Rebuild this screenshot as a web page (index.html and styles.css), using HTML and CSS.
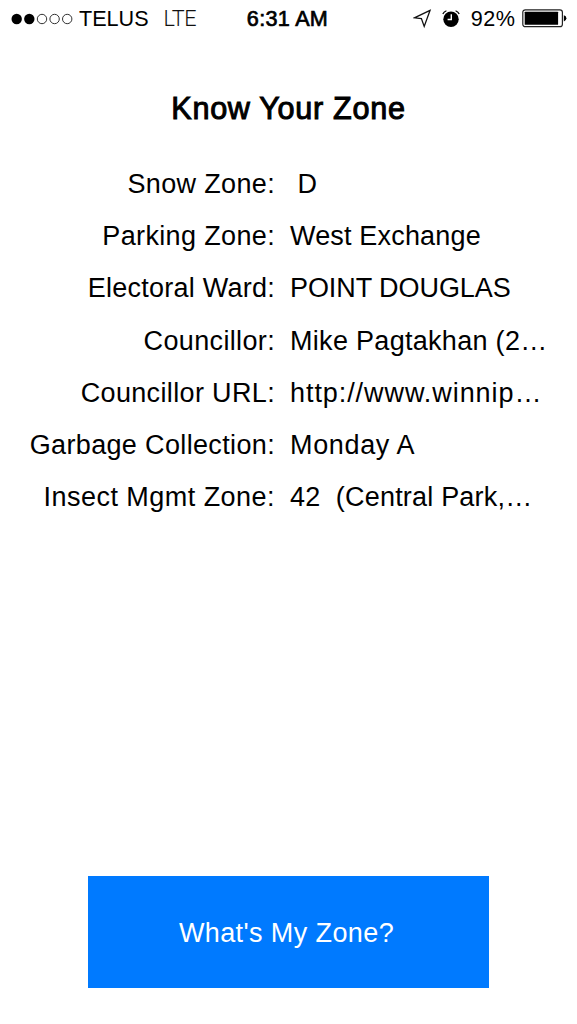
FILE: index.html
```
<!DOCTYPE html>
<html lang="en">
<head>
    <meta charset="UTF-8">
    <meta name="viewport" content="width=device-width, initial-scale=1.0">
    <title>Know Your Zone</title>
    <link rel="stylesheet" href="styles.css">
</head>
<body>
    <header class="status-bar">
        <div class="status-left">
            <svg class="signal" width="62" height="12" viewBox="0 0 62 12">
                <circle cx="5.7" cy="6" r="5.2" />
                <circle cx="18.3" cy="6" r="5.2" />
                <circle class="empty" cx="31" cy="6" r="4.7" />
                <circle class="empty" cx="43.6" cy="6" r="4.7" />
                <circle class="empty" cx="56.2" cy="6" r="4.7" />
            </svg>
            <span class="carrier">TELUS</span>
            <span class="network">LTE</span>
        </div>
        <span class="time">6:31 AM</span>
        <div class="status-right">
            <svg class="location" width="19" height="20" viewBox="0 0 19 20">
                <path d="M17 1.4 L1.4 8.8 L8.4 9.6 L11.2 17.4 Z" />
            </svg>
            <svg class="alarm" width="18" height="18" viewBox="0 0 18 18">
                <circle cx="9" cy="9.2" r="7.7" />
                <path class="bell" d="M0.8 4.1 Q1.8 1.8 4.4 0.8 M17.2 4.1 Q16.2 1.8 13.6 0.8" />
                <path class="hands" d="M9.3 4.3 V9.5 H5.6" />
            </svg>
            <span class="percent">92%</span>
            <svg class="battery" width="45" height="19" viewBox="0 0 45 19">
                <rect class="shell" x="0.8" y="0.8" width="39.6" height="16.9" rx="2.5" />
                <rect x="2.7" y="2.7" width="33.4" height="13.1" rx="0.6" />
                <path d="M41.8 6.2 Q44.4 6.8 44.4 9.3 Q44.4 11.8 41.8 12.4 Z" />
            </svg>
        </div>
    </header>

    <main>
        <h1>Know Your Zone</h1>

        <dl class="zones">
            <dt>Snow Zone:</dt>
            <dd>&nbsp;D</dd>
            <dt>Parking Zone:</dt>
            <dd class="parking">West Exchange</dd>
            <dt class="ward-label">Electoral Ward:</dt>
            <dd class="ward">POINT DOUGLAS</dd>
            <dt>Councillor:</dt>
            <dd class="councillor">Mike Pagtakhan (2…</dd>
            <dt>Councillor URL:</dt>
            <dd class="url">http://www.winnip…</dd>
            <dt>Garbage Collection:</dt>
            <dd class="garbage">Monday A</dd>
            <dt class="insect-label">Insect Mgmt Zone:</dt>
            <dd class="insect">42&nbsp; (Central Park,…</dd>
        </dl>

        <button class="zone-button">What's My Zone?</button>
    </main>
</body>
</html>
```
FILE: styles.css
```
* {
    margin: 0;
    padding: 0;
    box-sizing: border-box;
}

body {
    height: 1024px;
    display: flex;
    flex-direction: column;
    background-color: #fff;
    color: #000;
    font-family: "Liberation Sans", Arial, sans-serif;
    overflow: hidden;
}

/* Status bar */
.status-bar {
    height: 37px;
    display: grid;
    grid-template-columns: 1fr auto 1fr;
    align-items: center;
    padding: 0 10px 0 11px;
    font-size: 21.6px;
    line-height: 37px;
}

.status-left,
.status-right {
    display: flex;
    align-items: center;
}

.status-right {
    justify-content: flex-end;
}

.signal .empty {
    fill: none;
    stroke: #333;
    stroke-width: 1;
}

.carrier {
    margin-left: 6px;
}

.network {
    margin-left: 15px;
    color: #111;
    font-family: Roboto, sans-serif;
    font-weight: 300;
    letter-spacing: -0.4px;
}

.time {
    margin-right: 3px;
    letter-spacing: 0.3px;
    -webkit-text-stroke: 0.7px #000;
}

.location {
    fill: none;
    stroke: #111;
    stroke-width: 1.3;
}

.alarm {
    margin: 0 10.5px 0 10.5px;
}

.alarm .bell {
    fill: none;
    stroke: #000;
    stroke-width: 1.2;
}

.alarm .hands {
    fill: none;
    stroke: #fff;
    stroke-width: 1.4;
}

.percent {
    letter-spacing: 0.5px;
}

.battery {
    margin-left: 6.5px;
}

.battery .shell {
    fill: none;
    stroke: #222;
    stroke-width: 1.2;
}

/* Page content */
main {
    flex: 1;
    display: flex;
    flex-direction: column;
    align-items: center;
    padding: 51px 0 36px;
}

h1 {
    font-size: 30.6px;
    font-weight: normal;
    line-height: 40px;
    letter-spacing: 0.7px;
    -webkit-text-stroke: 1px #000;
}

/* Labels on the left, values on the right */
.zones {
    width: 100%;
    display: grid;
    grid-template-columns: 275px 1fr;
    grid-auto-rows: 52.25px;
    column-gap: 15px;
    margin-top: 29.9px;
    font-size: 27px;
    line-height: 52.25px;
    white-space: nowrap;
}

.zones dt {
    text-align: right;
    letter-spacing: 0.35px;
}

.zones .ward-label {
    letter-spacing: 0.25px;
}

.zones .insect-label {
    letter-spacing: 0.46px;
}

.parking {
    letter-spacing: 0.17px;
}

.ward {
    letter-spacing: -0.07px;
}

.councillor {
    letter-spacing: 0.3px;
}

.url {
    letter-spacing: 0.93px;
}

.garbage {
    letter-spacing: 0.65px;
}

.insect {
    letter-spacing: 0.2px;
}

.zone-button {
    width: 401px;
    height: 112px;
    margin-top: auto;
    padding: 2px 4px 0 0;
    border: none;
    background-color: #007aff;
    color: #fff;
    font-family: inherit;
    font-size: 27px;
    letter-spacing: 0.4px;
}
```
